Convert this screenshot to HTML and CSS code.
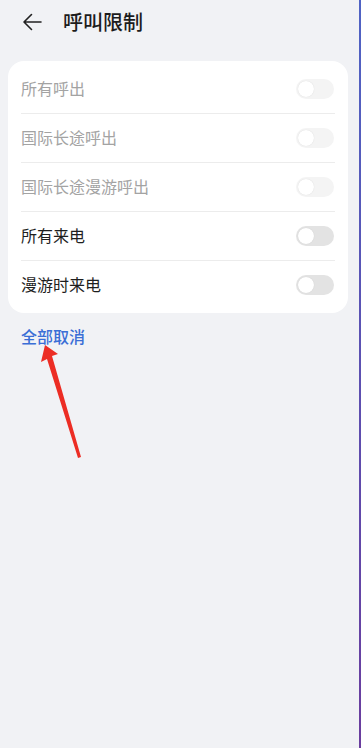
FILE: index.html
```html
<!DOCTYPE html>
<html lang="zh-CN">
<head>
<meta charset="utf-8">
<link rel="stylesheet" href="styles.css">
</head>
<body>
<div class="screen">
  <header class="topbar">
    <svg class="back" width="20" height="18" viewBox="0 0 20 18"><path d="M19 9H2.5M9.5 1.5L2 9l7.5 7.5" fill="none" stroke="#222" stroke-width="1.6" stroke-linecap="round" stroke-linejoin="round"/></svg>
    <h1 class="title">呼叫限制</h1>
  </header>
  <section class="card">
    <div class="row disabled"><span class="label">所有呼出</span><span class="toggle"></span></div>
    <div class="row disabled"><span class="label">国际长途呼出</span><span class="toggle"></span></div>
    <div class="row disabled"><span class="label">国际长途漫游呼出</span><span class="toggle"></span></div>
    <div class="row"><span class="label">所有来电</span><span class="toggle"></span></div>
    <div class="row last"><span class="label">漫游时来电</span><span class="toggle"></span></div>
  </section>
  <div class="cancel">全部取消</div>
  <svg class="annot" width="100" height="130" viewBox="0 0 100 130">
    <polygon points="45,345 58,354 52,356 81,457 78,458 47,359 41,362" transform="translate(0,-330)" fill="#ec2d24"/>
  </svg>
</div>
</body>
</html>
```
FILE: styles.css
```css
html, body {
  margin: 0;
  padding: 0;
}
body {
  background: #f1f2f5;
  font-family: "Noto Sans CJK SC", "Noto Sans", sans-serif;
}
.screen {
  position: relative;
  min-height: 748px;
  box-sizing: border-box;
  border-right: 2px solid #5a4fae;
  border-image: linear-gradient(#4f63c4, #6a3d9e) 1;
  border-top: 0;
  border-left: 0;
  border-bottom: 0;
}
.topbar {
  height: 61px;
  display: flex;
  align-items: flex-start;
  box-sizing: border-box;
  padding: 10px 0 0 22px;
}
.back {
  margin-top: 3px;
}
.title {
  margin: 0 0 0 21px;
  font-size: 20px;
  line-height: 24px;
  font-weight: 500;
  color: #1c1c1c;
}
.card {
  margin-left: 8px;
  width: 340px;
  background: #ffffff;
  border-radius: 16px;
  padding: 4px 0;
}
.row {
  height: 48px;
  margin: 0 13px;
  border-bottom: 1px solid #ececec;
  display: flex;
  align-items: center;
  justify-content: space-between;
}
.row.last {
  border-bottom: 0;
}
.label {
  font-size: 16px;
  color: #1e1e1e;
  padding-bottom: 2px;
}
.row.disabled .label {
  color: #a3a3a3;
}
.toggle {
  width: 38px;
  height: 20px;
  border-radius: 10px;
  background: #e3e3e3;
  position: relative;
  margin-right: 1px;
}
.toggle::after {
  content: "";
  position: absolute;
  left: 2px;
  top: 2px;
  width: 16px;
  height: 16px;
  border-radius: 50%;
  background: #fff;
  box-shadow: 0 0 1px rgba(0,0,0,0.15);
}
.row.disabled .toggle {
  background: #f4f4f4;
}
.cancel {
  margin: 12px 0 0 21px;
  font-size: 16px;
  font-weight: 500;
  color: #3a6ed6;
  line-height: 22px;
}
.annot {
  position: absolute;
  left: 0;
  top: 330px;
}
```
